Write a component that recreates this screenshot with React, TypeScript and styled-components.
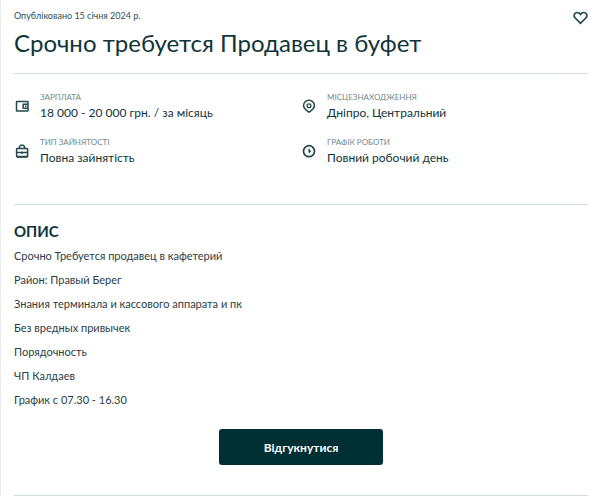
import React from "react";
import styled, { createGlobalStyle } from "styled-components";

const GlobalStyle = createGlobalStyle`
  * { box-sizing: border-box; }
  body {
    margin: 0;
    background: #fff;
    color: #10343a;
    font-family: Lato, "Noto Sans", sans-serif;
  }
`;

const Page = styled.main`
  padding: 8px 12px 0 13px;
  border-left: 1px solid #ebeeef;
`;

const Header = styled.header`
  display: flex;
  justify-content: space-between;
  align-items: flex-start;
  padding-bottom: 14px;
  border-bottom: 1px solid #d3dcde;
`;

const Published = styled.p`
  margin: 0;
  font-size: 9px;
  line-height: 16px;
  color: #2b4f54;
`;

const Title = styled.h1`
  margin: 3px 0 0;
  font-size: 24px;
  line-height: 32px;
  font-weight: 400;
`;

const FavouriteButton = styled.button`
  display: flex;
  margin: 2px 0 0;
  padding: 0;
  border: 0;
  background: none;
  color: #23484d;
`;

const Facts = styled.dl`
  display: grid;
  grid-template-columns: 1fr 1fr;
  gap: 13px 0;
  margin: 0;
  padding: 16px 0 37px;
  border-bottom: 1px solid #d3dcde;
`;

const Fact = styled.div`
  display: grid;
  grid-template-columns: 16px 1fr;
  column-gap: 10px;
  align-items: center;
`;

const FactIcon = styled.svg`
  display: block;
  width: 16px;
  height: 16px;
  grid-row: span 2;
  fill: none;
  stroke: #23484d;
  stroke-width: 1.5;
  stroke-linejoin: round;
`;

const FactLabel = styled.dt`
  font-size: 8px;
  line-height: 14px;
  color: #6f898c;
`;

const FactValue = styled.dd`
  margin: 0;
  font-size: 12px;
  line-height: 18px;
`;

const SectionTitle = styled.h2`
  margin: 0;
  padding: 16px 0 3px;
  font-size: 15px;
  line-height: 20px;
  font-weight: 700;
`;

const Description = styled.div`
  font-size: 11px;
  line-height: 24px;
  color: #2a4045;
`;

const Line = styled.p`
  margin: 0;
`;

const Actions = styled.div`
  display: flex;
  justify-content: center;
  padding: 17px 0 30px;
  border-bottom: 1px solid #d3dcde;
`;

const ApplyButton = styled.button`
  min-width: 164px;
  height: 36px;
  border: 0;
  border-radius: 3px;
  background: #002f34;
  color: #fff;
  font: inherit;
  font-size: 12px;
  font-weight: 700;
`;

const description = [
  "Срочно Требуется продавец в кафетерий",
  "Район: Правый Берег",
  "Знания терминала и кассового аппарата и пк",
  "Без вредных привычек",
  "Порядочность",
  "ЧП Калдаев",
  "График с 07.30 - 16.30",
];

const facts = [
  {
    label: "ЗАРПЛАТА",
    value: "18 000 - 20 000 грн. / за місяць",
    icon: (
      <>
        <rect x="2.500" y="3.500" width="11.500" height="9.500" rx="0.500" />
        <path d="M14 6.300H9.200v4H14" />
        <path d="M11 8.300h1.500" />
      </>
    ),
  },
  {
    label: "МІСЦЕЗНАХОДЖЕННЯ",
    value: "Дніпро, Центральний",
    icon: (
      <>
        <path d="M8 14.200C6.700 13 2.600 11.600 2.600 7.600a5.400 5.400 0 0 1 10.800 0c0 4-4.100 5.400-5.400 6.600Z" />
        <circle cx="8" cy="7.800" r="1.900" strokeWidth="1.300" />
      </>
    ),
  },
  {
    label: "ТИП ЗАЙНЯТОСТІ",
    value: "Повна зайнятість",
    icon: (
      <>
        <path d="M5.500 5.500V3.600L6.700 2.200h2.600l1.200 1.400v1.900" />
        <rect x="2.600" y="5.500" width="11" height="8.500" rx="0.700" />
        <path d="M2.600 9.500h11M8 8.500v2.500" />
        <path d="M3 13.500h10" />
      </>
    ),
  },
  {
    label: "ГРАФІК РОБОТИ",
    value: "Повний робочий день",
    icon: (
      <>
        <circle cx="8" cy="8.200" r="5.500" strokeWidth="1.700" />
        <path d="M8 5.800v4.800L10.200 8.200Z" fill="#23484d" stroke="none" />
        <path d="M8 5.600v3.800" strokeWidth="1" />
      </>
    ),
  },
];

export default function App() {
  return (
    <>
      <GlobalStyle />
      <Page>
        <Header>
          <div>
            <Published>Опубліковано 15 січня 2024 р.</Published>
            <Title>Срочно требуется Продавец в буфет</Title>
          </div>
          <FavouriteButton type="button" aria-label="Додати в обране">
            <svg width="15" height="15" viewBox="0 0 15 15" fill="none" stroke="currentColor" strokeWidth="1.700">
              <path d="M7.500 13.400 2 7.800C.4 5.800 1.200 2.800 4 2.500c1.600-.1 2.700.7 3.500 1.900.8-1.200 1.900-2 3.500-1.900 2.800.3 3.600 3.300 2 5.300Z" />
            </svg>
          </FavouriteButton>
        </Header>
        <Facts>
          {facts.map((fact) => (
            <Fact key={fact.label}>
              <FactIcon viewBox="0 0 16 16" aria-hidden="true">{fact.icon}</FactIcon>
              <FactLabel>{fact.label}</FactLabel>
              <FactValue>{fact.value}</FactValue>
            </Fact>
          ))}
        </Facts>
        <section>
          <SectionTitle>ОПИС</SectionTitle>
          <Description>
            {description.map((text) => (
              <Line key={text}>{text}</Line>
            ))}
          </Description>
        </section>
        <Actions>
          <ApplyButton type="button">Відгукнутися</ApplyButton>
        </Actions>
      </Page>
    </>
  );
}
